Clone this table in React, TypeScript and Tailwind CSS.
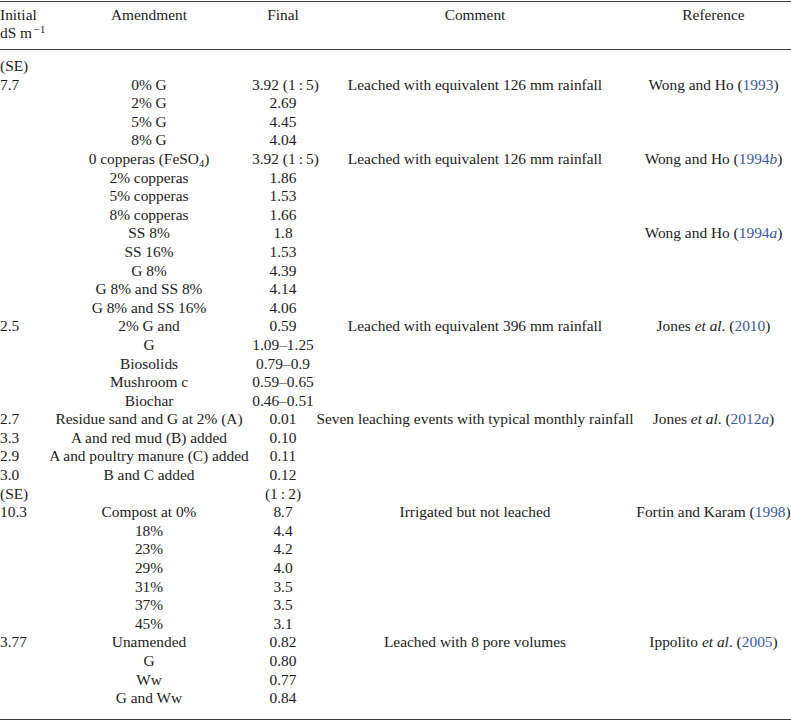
import React from "react";

type Row = {
  initial?: React.ReactNode;
  amendment?: React.ReactNode;
  final?: React.ReactNode;
  comment?: React.ReactNode;
  reference?: React.ReactNode;
};

const Year = ({ children }: { children: React.ReactNode }) => (
  <span className="text-[#3a5aa8]">{children}</span>
);

const Ref = ({ authors, etal, year, suffix }: { authors: string; etal?: boolean; year: string; suffix?: string }) => (
  <>
    {authors}
    {etal && (
      <>
        {" "}
        <i>et al</i>.
      </>
    )}{" "}
    (
    <Year>
      {year}
      {suffix && <i>{suffix}</i>}
    </Year>
    )
  </>
);

const leached126 = "Leached with equivalent 126 mm rainfall";

const rows: Row[] = [
  { initial: "(SE)" },
  { initial: "7.7", amendment: "0% G", final: "3.92 (1\u2009:\u20095)", comment: leached126, reference: <Ref authors="Wong and Ho" year="1993" /> },
  { amendment: "2% G", final: "2.69" },
  { amendment: "5% G", final: "4.45" },
  { amendment: "8% G", final: "4.04" },
  {
    amendment: (
      <>
        0 copperas (FeSO<sub className="text-[10.5px]">4</sub>)
      </>
    ),
    final: "3.92 (1\u2009:\u20095)",
    comment: leached126,
    reference: <Ref authors="Wong and Ho" year="1994" suffix="b" />,
  },
  { amendment: "2% copperas", final: "1.86" },
  { amendment: "5% copperas", final: "1.53" },
  { amendment: "8% copperas", final: "1.66" },
  { amendment: "SS 8%", final: "1.8", reference: <Ref authors="Wong and Ho" year="1994" suffix="a" /> },
  { amendment: "SS 16%", final: "1.53" },
  { amendment: "G 8%", final: "4.39" },
  { amendment: "G 8% and SS 8%", final: "4.14" },
  { amendment: "G 8% and SS 16%", final: "4.06" },
  {
    initial: "2.5",
    amendment: "2% G and",
    final: "0.59",
    comment: "Leached with equivalent 396 mm rainfall",
    reference: <Ref authors="Jones" etal year="2010" />,
  },
  { amendment: "G", final: "1.09\u20131.25" },
  { amendment: "Biosolids", final: "0.79\u20130.9" },
  { amendment: "Mushroom c", final: "0.59\u20130.65" },
  { amendment: "Biochar", final: "0.46\u20130.51" },
  {
    initial: "2.7",
    amendment: "Residue sand and G at 2% (A)",
    final: "0.01",
    comment: "Seven leaching events with typical monthly rainfall",
    reference: <Ref authors="Jones" etal year="2012" suffix="a" />,
  },
  { initial: "3.3", amendment: "A and red mud (B) added", final: "0.10" },
  { initial: "2.9", amendment: "A and poultry manure (C) added", final: "0.11" },
  { initial: "3.0", amendment: "B and C added", final: "0.12" },
  { initial: "(SE)", final: "(1\u2009:\u20092)" },
  {
    initial: "10.3",
    amendment: "Compost at 0%",
    final: "8.7",
    comment: "Irrigated but not leached",
    reference: <Ref authors="Fortin and Karam" year="1998" />,
  },
  { amendment: "18%", final: "4.4" },
  { amendment: "23%", final: "4.2" },
  { amendment: "29%", final: "4.0" },
  { amendment: "31%", final: "3.5" },
  { amendment: "37%", final: "3.5" },
  { amendment: "45%", final: "3.1" },
  {
    initial: "3.77",
    amendment: "Unamended",
    final: "0.82",
    comment: "Leached with 8 pore volumes",
    reference: <Ref authors="Ippolito" etal year="2005" />,
  },
  { amendment: "G", final: "0.80" },
  { amendment: "Ww", final: "0.77" },
  { amendment: "G and Ww", final: "0.84" },
];

const cols = "grid grid-cols-[46px_206px_62px_322px_155px]";

export default function App() {
  return (
    <div className="w-[791px] bg-white text-[#1c1c1c] text-[15.4px] font-['Liberation_Serif','Times_New_Roman',serif]">
      <div className="border-t-[1.5px] border-b-[1.5px] border-[#3a3a3a] mt-[1px]">
        {/* header */}
        <div className={`${cols} border-b-[1.5px] border-[#3a3a3a] pt-[4px] pb-[7px] leading-[18px]`}>
          <div className="whitespace-nowrap">
            Initial
            <br />
            dS m<sup className="text-[10.5px] ml-[2px]">&minus;1</sup>
          </div>
          <div className="text-center">Amendment</div>
          <div className="text-center">Final</div>
          <div className="text-center">Comment</div>
          <div className="text-center">Reference</div>
        </div>

        {/* body */}
        <div className="pt-[7px] pb-[11px]">
          {rows.map((r, i) => (
            <div key={i} className={`${cols} h-[18.6px] leading-[18.6px] whitespace-nowrap`}>
              <div>{r.initial}</div>
              <div className="text-center">{r.amendment}</div>
              <div className="text-center">{r.final}</div>
              <div className="text-center">{r.comment}</div>
              <div className="text-center">{r.reference}</div>
            </div>
          ))}
        </div>
      </div>
    </div>
  );
}
